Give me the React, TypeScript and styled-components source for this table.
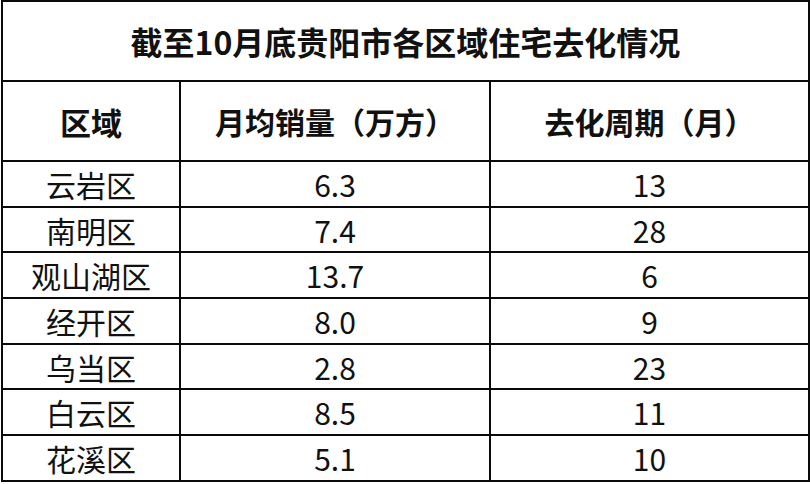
import styled, { createGlobalStyle } from "styled-components";

const GlobalStyle = createGlobalStyle`
  html, body {
    margin: 0;
    padding: 0;
    background: #ffffff;
  }
  body {
    font-family: "Noto Sans CJK SC", "Noto Sans", sans-serif;
    color: #111111;
  }
`;

const Page = styled.div`
  width: 810px;
  height: 484px;
  background: #ffffff;
  overflow: hidden;
`;

const Table = styled.table`
  border-collapse: collapse;
  width: 807px;
  table-layout: fixed;
  margin-left: 1px;
`;

const Cell = styled.td<{ $bold?: boolean; $size?: number }>`
  border: 2px solid #0a0a0a;
  padding: 0;
  text-align: center;
  vertical-align: middle;
  font-size: ${props => props.$size ?? 30}px;
  font-weight: ${props => (props.$bold ? 700 : 400)};
  line-height: 1;
  white-space: nowrap;
`;

const TitleRow = styled.tr`
  height: 80px;
`;

const HeadRow = styled.tr`
  height: 80px;
`;

const DataRow = styled.tr`
  height: 45.7px;
`;

const rows = [
  { area: "云岩区", sales: "6.3", cycle: "13" },
  { area: "南明区", sales: "7.4", cycle: "28" },
  { area: "观山湖区", sales: "13.7", cycle: "6" },
  { area: "经开区", sales: "8.0", cycle: "9" },
  { area: "乌当区", sales: "2.8", cycle: "23" },
  { area: "白云区", sales: "8.5", cycle: "11" },
  { area: "花溪区", sales: "5.1", cycle: "10" },
];

export default function App() {
  return (
    <Page>
      <GlobalStyle />
      <Table>
        <colgroup>
          <col style={{ width: 178 }} />
          <col style={{ width: 310 }} />
          <col style={{ width: 319 }} />
        </colgroup>
        <tbody>
          <TitleRow>
            <Cell colSpan={3} $bold $size={32}>
              截至10月底贵阳市各区域住宅去化情况
            </Cell>
          </TitleRow>
          <HeadRow>
            <Cell $bold $size={31}>区域</Cell>
            <Cell $bold $size={30}>月均销量（万方）</Cell>
            <Cell $bold $size={30}>去化周期（月）</Cell>
          </HeadRow>
          {rows.map(r => (
            <DataRow key={r.area}>
              <Cell>{r.area}</Cell>
              <Cell>{r.sales}</Cell>
              <Cell>{r.cycle}</Cell>
            </DataRow>
          ))}
        </tbody>
      </Table>
    </Page>
  );
}
